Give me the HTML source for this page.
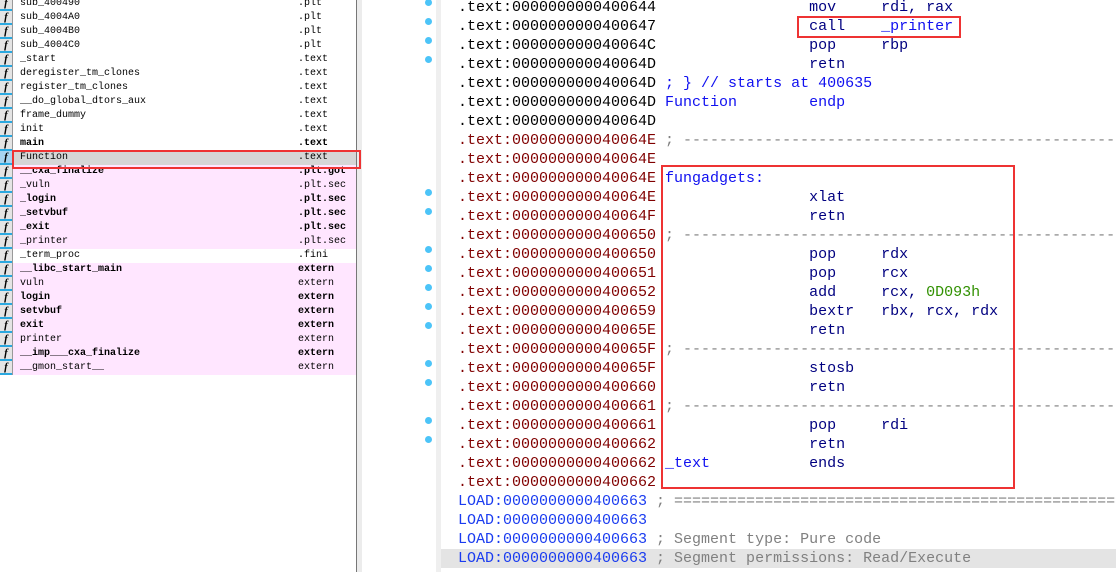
<!DOCTYPE html>
<html><head><meta charset="utf-8"><style>
*{margin:0;padding:0;box-sizing:border-box}
body{width:1116px;height:572px;overflow:hidden;background:#fff;position:relative;font-family:"Liberation Mono",monospace}
.lr{position:absolute;left:0;width:356px;height:14px;font-size:10px;line-height:14px;color:#000}
.lr.p{background:#ffe6ff}
.lr .ic{position:absolute;left:0;top:0;width:13px;height:14px;background:#e4e4e4;border-right:1px solid #999;font-family:"Liberation Serif",serif;font-style:italic;font-weight:bold;font-size:11px;text-align:center;line-height:12px}
.lr .ic:after{content:"";position:absolute;left:0;right:0;bottom:0;height:2px;background:#2aa8e0}
.lr .n{position:absolute;left:20px;top:0;white-space:pre}
.lr .s{position:absolute;left:298px;top:0;white-space:pre}
.lr.b{font-weight:bold}
.cl{position:absolute;left:458px;height:19px;font-size:15px;line-height:19px;white-space:pre;width:658px;overflow:hidden}
.k{color:#000}.r{color:#800000}.L{color:#1a3cf0}.bl{color:#1010f0}.nv{color:#000080}.gr{color:#808080}.gn{color:#309000}
.dot{position:absolute;left:425px;width:7px;height:7px;border-radius:50%;background:#4cc4f8}
.rb{position:absolute;border:2.5px solid #ee3333}
</style></head><body>
<div style="position:absolute;left:356px;top:0;width:1px;height:572px;background:#777"></div>
<div style="position:absolute;left:357px;top:0;width:5px;height:572px;background:#ececec"></div>
<div style="position:absolute;left:436px;top:0;width:5px;height:572px;background:#efefef"></div>
<div style="position:absolute;left:441px;top:549px;width:675px;height:19px;background:#e4e4e4"></div>

<div class="lr" style="top:-3px"><span class="ic">f</span><span class="n">sub_400490</span><span class="s">.plt</span></div>
<div class="lr" style="top:11px"><span class="ic">f</span><span class="n">sub_4004A0</span><span class="s">.plt</span></div>
<div class="lr" style="top:25px"><span class="ic">f</span><span class="n">sub_4004B0</span><span class="s">.plt</span></div>
<div class="lr" style="top:39px"><span class="ic">f</span><span class="n">sub_4004C0</span><span class="s">.plt</span></div>
<div class="lr" style="top:53px"><span class="ic">f</span><span class="n">_start</span><span class="s">.text</span></div>
<div class="lr" style="top:67px"><span class="ic">f</span><span class="n">deregister_tm_clones</span><span class="s">.text</span></div>
<div class="lr" style="top:81px"><span class="ic">f</span><span class="n">register_tm_clones</span><span class="s">.text</span></div>
<div class="lr" style="top:95px"><span class="ic">f</span><span class="n">__do_global_dtors_aux</span><span class="s">.text</span></div>
<div class="lr" style="top:109px"><span class="ic">f</span><span class="n">frame_dummy</span><span class="s">.text</span></div>
<div class="lr" style="top:123px"><span class="ic">f</span><span class="n">init</span><span class="s">.text</span></div>
<div class="lr b" style="top:137px"><span class="ic">f</span><span class="n">main</span><span class="s">.text</span></div>
<div class="lr" style="top:151px;background:#d6d6d6"><span class="ic" style="background:#a8d4f0">f</span><span class="n">Function</span><span class="s">.text</span></div>
<div class="lr p b" style="top:165px"><span class="ic">f</span><span class="n">__cxa_finalize</span><span class="s">.plt.got</span></div>
<div class="lr p" style="top:179px"><span class="ic">f</span><span class="n">_vuln</span><span class="s">.plt.sec</span></div>
<div class="lr p b" style="top:193px"><span class="ic">f</span><span class="n">_login</span><span class="s">.plt.sec</span></div>
<div class="lr p b" style="top:207px"><span class="ic">f</span><span class="n">_setvbuf</span><span class="s">.plt.sec</span></div>
<div class="lr p b" style="top:221px"><span class="ic">f</span><span class="n">_exit</span><span class="s">.plt.sec</span></div>
<div class="lr p" style="top:235px"><span class="ic">f</span><span class="n">_printer</span><span class="s">.plt.sec</span></div>
<div class="lr" style="top:249px"><span class="ic">f</span><span class="n">_term_proc</span><span class="s">.fini</span></div>
<div class="lr p b" style="top:263px"><span class="ic">f</span><span class="n">__libc_start_main</span><span class="s">extern</span></div>
<div class="lr p" style="top:277px"><span class="ic">f</span><span class="n">vuln</span><span class="s">extern</span></div>
<div class="lr p b" style="top:291px"><span class="ic">f</span><span class="n">login</span><span class="s">extern</span></div>
<div class="lr p b" style="top:305px"><span class="ic">f</span><span class="n">setvbuf</span><span class="s">extern</span></div>
<div class="lr p b" style="top:319px"><span class="ic">f</span><span class="n">exit</span><span class="s">extern</span></div>
<div class="lr p" style="top:333px"><span class="ic">f</span><span class="n">printer</span><span class="s">extern</span></div>
<div class="lr p b" style="top:347px"><span class="ic">f</span><span class="n">__imp___cxa_finalize</span><span class="s">extern</span></div>
<div class="lr p" style="top:361px"><span class="ic">f</span><span class="n">__gmon_start__</span><span class="s">extern</span></div>
<div class="rb" style="left:12px;top:150px;width:349px;height:19px"></div>

<div class="dot" style="top:-1px"></div><div class="dot" style="top:18px"></div><div class="dot" style="top:37px"></div><div class="dot" style="top:56px"></div>
<div class="dot" style="top:189px"></div><div class="dot" style="top:208px"></div><div class="dot" style="top:246px"></div><div class="dot" style="top:265px"></div>
<div class="dot" style="top:284px"></div><div class="dot" style="top:303px"></div><div class="dot" style="top:322px"></div><div class="dot" style="top:360px"></div>
<div class="dot" style="top:379px"></div><div class="dot" style="top:417px"></div><div class="dot" style="top:436px"></div>

<div class="cl k" style="top:-2px">.text:0000000000400644                 <span class="nv">mov     rdi, rax</span></div>
<div class="cl k" style="top:17px">.text:0000000000400647                 <span class="nv">call    <span class="bl">_printer</span></span></div>
<div class="cl k" style="top:36px">.text:000000000040064C                 <span class="nv">pop     rbp</span></div>
<div class="cl k" style="top:55px">.text:000000000040064D                 <span class="nv">retn</span></div>
<div class="cl k" style="top:74px">.text:000000000040064D <span class="bl">; } // starts at 400635</span></div>
<div class="cl k" style="top:93px">.text:000000000040064D <span class="bl">Function        endp</span></div>
<div class="cl k" style="top:112px">.text:000000000040064D</div>
<div class="cl r" style="top:131px">.text:000000000040064E <span class="gr">; ---------------------------------------------------------------------------</span></div>
<div class="cl r" style="top:150px">.text:000000000040064E</div>
<div class="cl r" style="top:169px">.text:000000000040064E <span class="bl">fungadgets:</span></div>
<div class="cl r" style="top:188px">.text:000000000040064E                 <span class="nv">xlat</span></div>
<div class="cl r" style="top:207px">.text:000000000040064F                 <span class="nv">retn</span></div>
<div class="cl r" style="top:226px">.text:0000000000400650 <span class="gr">; ---------------------------------------------------------------------------</span></div>
<div class="cl r" style="top:245px">.text:0000000000400650                 <span class="nv">pop     rdx</span></div>
<div class="cl r" style="top:264px">.text:0000000000400651                 <span class="nv">pop     rcx</span></div>
<div class="cl r" style="top:283px">.text:0000000000400652                 <span class="nv">add     rcx, <span class="gn">0D093h</span></span></div>
<div class="cl r" style="top:302px">.text:0000000000400659                 <span class="nv">bextr   rbx, rcx, rdx</span></div>
<div class="cl r" style="top:321px">.text:000000000040065E                 <span class="nv">retn</span></div>
<div class="cl r" style="top:340px">.text:000000000040065F <span class="gr">; ---------------------------------------------------------------------------</span></div>
<div class="cl r" style="top:359px">.text:000000000040065F                 <span class="nv">stosb</span></div>
<div class="cl r" style="top:378px">.text:0000000000400660                 <span class="nv">retn</span></div>
<div class="cl r" style="top:397px">.text:0000000000400661 <span class="gr">; ---------------------------------------------------------------------------</span></div>
<div class="cl r" style="top:416px">.text:0000000000400661                 <span class="nv">pop     rdi</span></div>
<div class="cl r" style="top:435px">.text:0000000000400662                 <span class="nv">retn</span></div>
<div class="cl r" style="top:454px">.text:0000000000400662 <span class="bl">_text           </span><span class="nv">ends</span></div>
<div class="cl r" style="top:473px">.text:0000000000400662</div>
<div class="cl L" style="top:492px">LOAD:0000000000400663 <span class="gr">; ===========================================================================</span></div>
<div class="cl L" style="top:511px">LOAD:0000000000400663</div>
<div class="cl L" style="top:530px">LOAD:0000000000400663 <span class="gr">; Segment type: Pure code</span></div>
<div class="cl L" style="top:549px">LOAD:0000000000400663 <span class="gr">; Segment permissions: Read/Execute</span></div>

<div class="rb" style="left:797px;top:16px;width:164px;height:22px"></div>
<div class="rb" style="left:661px;top:165px;width:354px;height:324px"></div>
</body></html>
